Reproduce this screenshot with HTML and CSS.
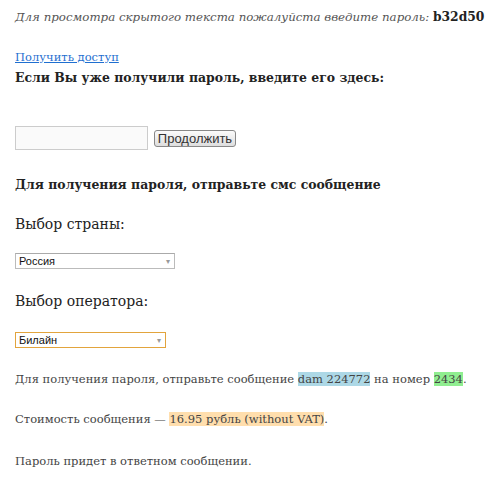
FILE: index.html
```html
<!DOCTYPE html>
<html lang="ru">
<head>
<meta charset="utf-8">
<link rel="stylesheet" href="styles.css">
</head>
<body>
<div class="page">
  <p class="notice"><span class="notice-text">Для просмотра скрытого текста пожалуйста введите пароль:</span> <b class="code">b32d50</b></p>
  <a class="access" href="#">Получить доступ</a>
  <h3 class="heading first">Если Вы уже получили пароль, введите его здесь:</h3>
  <form class="pass-form">
    <input class="pass-input" type="text">
    <button class="pass-btn" type="button">Продолжить</button>
  </form>
  <h3 class="heading second">Для получения пароля, отправьте смс сообщение</h3>
  <h3 class="label country-label">Выбор страны:</h3>
  <div class="select country"><span>Россия</span><span class="arrow">▾</span></div>
  <h3 class="label operator-label">Выбор оператора:</h3>
  <div class="select operator"><span>Билайн</span><span class="arrow">▾</span></div>
  <p class="text t1">Для получения пароля, отправьте сообщение <span class="hl-blue">dam 224772</span> на номер <span class="hl-green">2434</span>.</p>
  <p class="text t2">Стоимость сообщения — <span class="hl-orange">16.95 рубль (without VAT)</span>.</p>
  <p class="text t3">Пароль придет в ответном сообщении.</p>
</div>
</body>
</html>
```
FILE: styles.css
```css
html, body { margin: 0; padding: 0; background: #fff; }
.page {
  display: flex; flex-direction: column; align-items: flex-start;
  padding: 8px 15px 0;
  font-family: "DejaVu Serif", serif;
  color: #222;
}
.notice { margin: 0; font-size: 11.8px; line-height: 18px; white-space: nowrap; }
.notice-text { font-style: italic; color: #555; }
.code { font-size: 12.3px; color: #222; }
.access {
  margin-top: 23px;
  font-size: 11.5px; color: #1f6fd0; line-height: 16px;
}
.heading {
  margin: 0; font-family: "DejaVu Serif Condensed", "DejaVu Serif", serif;
  font-stretch: condensed;
  font-size: 13.8px; font-weight: bold; line-height: 20px; color: #222;
}
.heading.first { margin-top: 2px; }
.heading.second { margin-top: 24px; }
.pass-form { display: flex; align-items: center; gap: 6px; margin: 39px 0 0; }
.pass-input {
  box-sizing: border-box; width: 133px; height: 24px; margin: 0; padding: 1px;
  border: 1px solid #ccc; background: #fafafa;
}
.pass-btn {
  box-sizing: border-box; height: 17px; width: 82px; padding: 0; margin: 0;
  font-family: "Liberation Sans", Arial, sans-serif; font-size: 13px; line-height: 15px; color: #333;
  border: 1px solid #888; border-radius: 3px;
  background: linear-gradient(#fbfbfb, #dedede);
}
.label { margin: 0; font-size: 14px; font-weight: normal; line-height: 20px; color: #222; }
.country-label { margin-top: 20px; }
.operator-label { margin-top: 22px; }
.select {
  box-sizing: border-box;
  display: flex; justify-content: space-between; align-items: center;
  height: 16px; padding: 0 4px 0 3px;
  font-family: "Liberation Sans", Arial, sans-serif; font-size: 11px; color: #111;
  border: 1px solid #bbb; border-top-color: #aaa; background: #fff;
}
.select .arrow { font-size: 8px; color: #999; }
.country { width: 160px; margin-top: 19px; }
.operator { width: 151px; margin-top: 21px; border-color: #e2a43d; }
.text { margin: 0; font-size: 11.5px; line-height: 18px; color: #444; }
.t1 { margin-top: 22px; }
.t2 { margin-top: 22px; }
.t3 { margin-top: 24px; }
.hl-blue { background: #add8e6; }
.hl-green { background: #90ee90; }
.hl-orange { background: #ffdead; }
```
